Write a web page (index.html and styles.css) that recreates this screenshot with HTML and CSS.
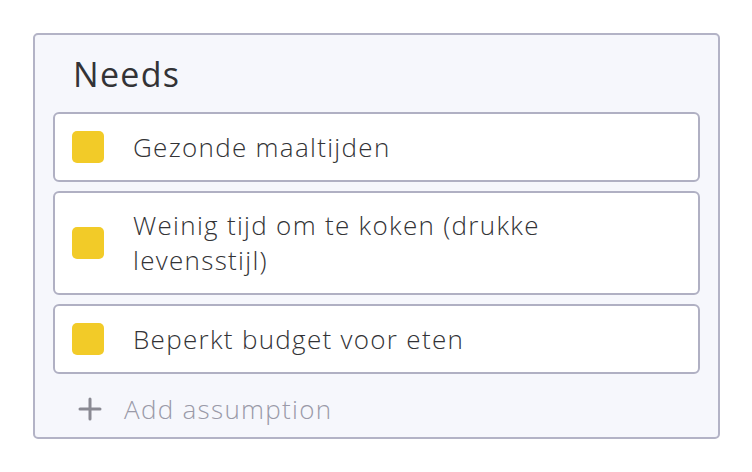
FILE: index.html
```html
<!DOCTYPE html>
<html>
<head>
<meta charset="utf-8">
<link rel="stylesheet" href="styles.css">
</head>
<body>
<section class="panel">
  <h2 class="title">Needs</h2>
  <ul class="list">
    <li class="card"><span class="swatch"></span><span class="text">Gezonde maaltijden</span></li>
    <li class="card"><span class="swatch"></span><span class="text">Weinig tijd om te koken (drukke levensstijl)</span></li>
    <li class="card"><span class="swatch"></span><span class="text">Beperkt budget voor eten</span></li>
  </ul>
  <div class="add">
    <svg class="plus" width="24" height="24" viewBox="0 0 24 24"><path d="M12 2v20M2 12h20" stroke="#8a8a93" stroke-width="3" stroke-linecap="round"/></svg>
    <span>Add assumption</span>
  </div>
</section>
</body>
</html>
```
FILE: styles.css
```css
html, body { margin: 0; padding: 0; background: #ffffff; }
body { font-family: "Open Sans", "Lato", sans-serif; color: #3b3b3f; }
.panel {
  box-sizing: border-box;
  margin: 33px 0 0 33px;
  width: 687px;
  height: 406px;
  border: 2px solid #b3b3c6;
  border-radius: 5px;
  background: #f6f7fc;
  padding: 0 18px;
}
.title {
  margin: 0;
  height: 77px;
  display: flex;
  align-items: center;
  padding-left: 20px;
  font-size: 34px;
  font-weight: 400;
  letter-spacing: 1.3px;
  color: #333336;
}
.list { list-style: none; margin: 0; padding: 0; display: flex; flex-direction: column; gap: 9px; }
.card {
  box-sizing: border-box;
  display: flex;
  align-items: center;
  gap: 29px;
  background: #fff;
  border: 2px solid #b0b0c3;
  border-radius: 6px;
  padding: 15px 40px 15px 17px;
  min-height: 70px;
}
.swatch { flex: none; width: 32px; height: 32px; border-radius: 5px; background: #f2cb28; }
.text { font-size: 26px; line-height: 35px; letter-spacing: 1.3px; font-weight: 300; color: #333336; }
.add {
  display: flex;
  align-items: center;
  gap: 22px;
  padding: 17px 0 0 25px;
  font-size: 26px;
  letter-spacing: 1.3px;
  font-weight: 300;
  color: #9a9aa8;
}
.plus { flex: none; }
```
